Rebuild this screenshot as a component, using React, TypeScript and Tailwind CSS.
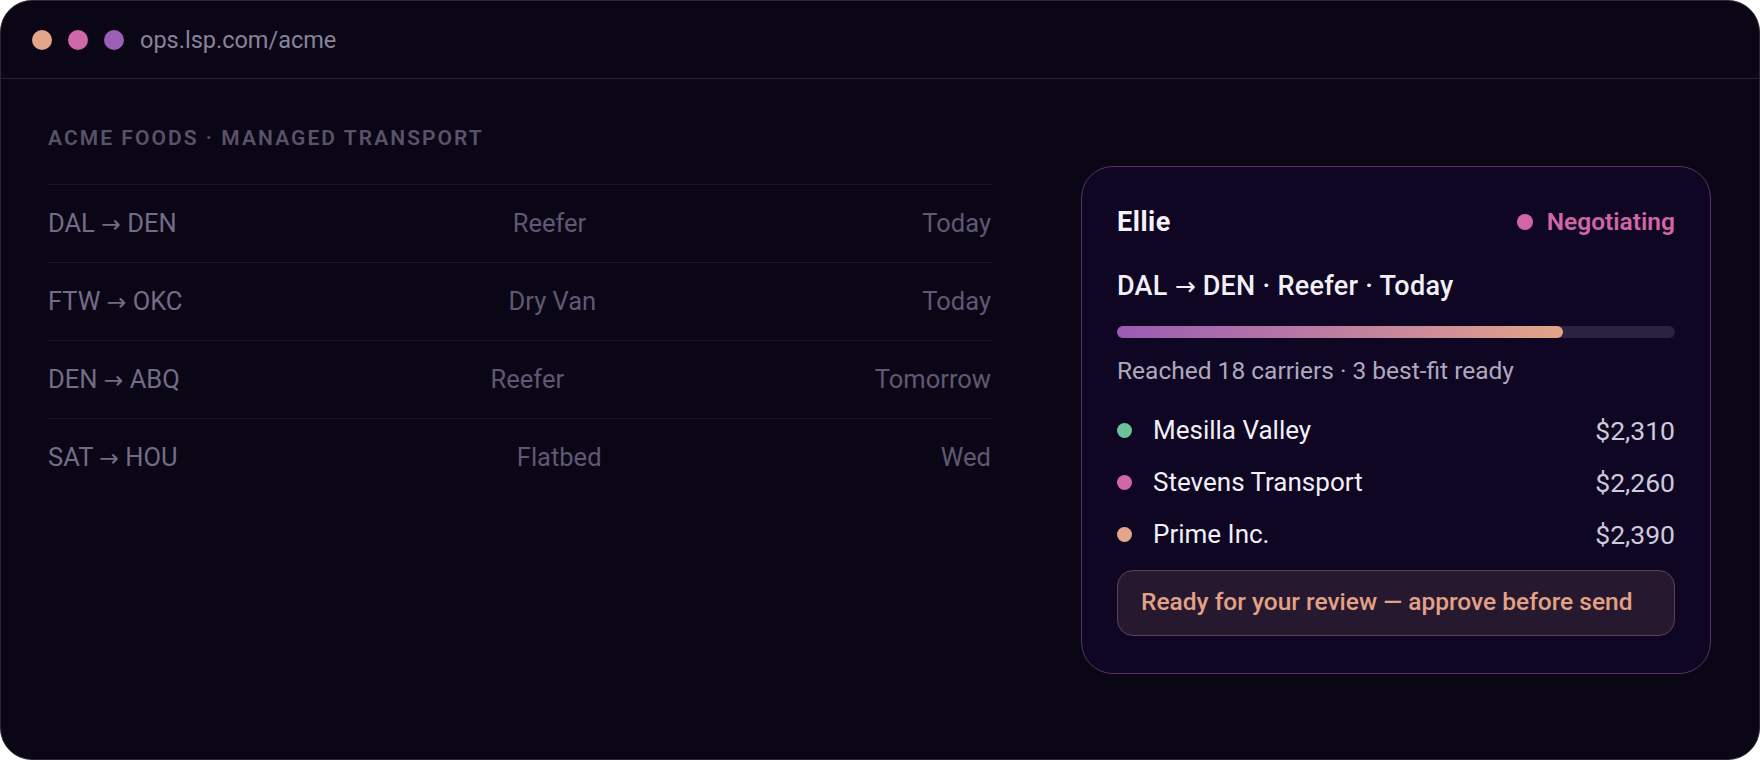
import React from "react";

type Load = { lane: string; equipment: string; pickup: string };
type Carrier = { name: string; rate: string; dot: string };

const loads: Load[] = [
  { lane: "DAL → DEN", equipment: "Reefer", pickup: "Today" },
  { lane: "FTW → OKC", equipment: "Dry Van", pickup: "Today" },
  { lane: "DEN → ABQ", equipment: "Reefer", pickup: "Tomorrow" },
  { lane: "SAT → HOU", equipment: "Flatbed", pickup: "Wed" },
];

const carriers: Carrier[] = [
  { name: "Mesilla Valley", rate: "$2,310", dot: "bg-[#6cc39b]" },
  { name: "Stevens Transport", rate: "$2,260", dot: "bg-[#d067a8]" },
  { name: "Prime Inc.", rate: "$2,390", dot: "bg-[#e3a68a]" },
];

// Roboto's arrow is tiny, so lanes render the arrow in DejaVu
function Lane({ text }: { text: string }) {
  const [from, to] = text.split(" → ");
  return (
    <>
      {from} <span className="font-['DejaVu_Sans',sans-serif] text-[0.92em] font-normal">→</span> {to}
    </>
  );
}

function TitleBar() {
  return (
    <div className="flex h-[78px] items-center border-b border-[#29233a] pl-[31px]">
      <div className="flex items-center gap-[16px]">
        <span className="h-[20px] w-[20px] rounded-full bg-[#e2a58b]" />
        <span className="h-[20px] w-[20px] rounded-full bg-[#cf68a8]" />
        <span className="h-[20px] w-[20px] rounded-full bg-[#9c5fb6]" />
      </div>
      <span className="ml-[16px] text-[23.5px] leading-[28px] text-[#8a8299]">ops.lsp.com/acme</span>
    </div>
  );
}

function LoadBoard() {
  return (
    <div className="w-[943px] shrink-0 self-start">
      <div className="text-[21px] font-semibold uppercase leading-[28px] tracking-[0.098em] text-[#5a5268]">
        Acme Foods · Managed Transport
      </div>
      <div className="mt-[32px]">
        {loads.map((l) => (
          <div
            key={l.lane}
            className="flex h-[78px] items-center justify-between border-t border-[#1b1527] text-[25.5px]"
          >
            <span className="text-[#736c86]">
              <Lane text={l.lane} />
            </span>
            <span className="text-[#5f5872]">{l.equipment}</span>
            <span className="text-[#5f5872]">{l.pickup}</span>
          </div>
        ))}
      </div>
    </div>
  );
}

function AgentCard() {
  return (
    <div className="mt-[3px] w-[630px] shrink-0 rounded-[32px] border border-[#58335f] bg-[#0e0623] px-[35px] pb-[37px] pt-[39px]">
      <div className="flex items-center justify-between leading-[32px]">
        <span className="text-[27px] font-bold tracking-[0.02em] text-[#f6f3fa]">Ellie</span>
        <span className="flex items-center gap-[14px] text-[24.5px] font-semibold text-[#d166a6]">
          <span className="h-[16px] w-[16px] rounded-full bg-[#d166a6]" />
          Negotiating
        </span>
      </div>
      <div className="mt-[32px] text-[27px] font-medium leading-[32px] tracking-[0.01em] text-[#f2eff7]">
        <Lane text="DAL → DEN" /> · Reefer · Today
      </div>
      <div className="mt-[23px] h-[12px] w-full rounded-full bg-[#2b2140]">
        <div className="h-full w-[80%] rounded-full bg-gradient-to-r from-[#9a5bb4] via-[#c07da0] to-[#e3a487]" />
      </div>
      <div className="mt-[17px] text-[24.5px] leading-[32px] text-[#b0a9be]">
        Reached 18 carriers · 3 best-fit ready
      </div>
      <div className="mt-[18px]">
        {carriers.map((c) => (
          <div key={c.name} className="flex h-[52px] items-center justify-between">
            <span className="flex items-center gap-[21px] text-[26px] text-[#f2eff7]">
              <span className={`h-[15px] w-[15px] rounded-full ${c.dot}`} />
              {c.name}
            </span>
            <span className="text-[26.5px] text-[#cfc9d9]">{c.rate}</span>
          </div>
        ))}
      </div>
      <div className="mt-[9px] flex h-[66px] items-center rounded-[16px] border border-[#5c4150] bg-[#26192f] px-[23px] text-[24.5px] font-medium text-[#e3a185]">
        Ready for your review — approve before send
      </div>
    </div>
  );
}

export default function App() {
  return (
    <div className="h-[760px] w-[1760px] bg-white font-['Roboto',sans-serif]">
      <div className="flex h-full flex-col overflow-hidden rounded-[32px] border border-[#2b2638] bg-[#0b0616]">
        <TitleBar />
        <div className="flex flex-1 items-center gap-[90px] px-[47px] pb-[47px] pt-[45px]">
          <LoadBoard />
          <AgentCard />
        </div>
      </div>
    </div>
  );
}
